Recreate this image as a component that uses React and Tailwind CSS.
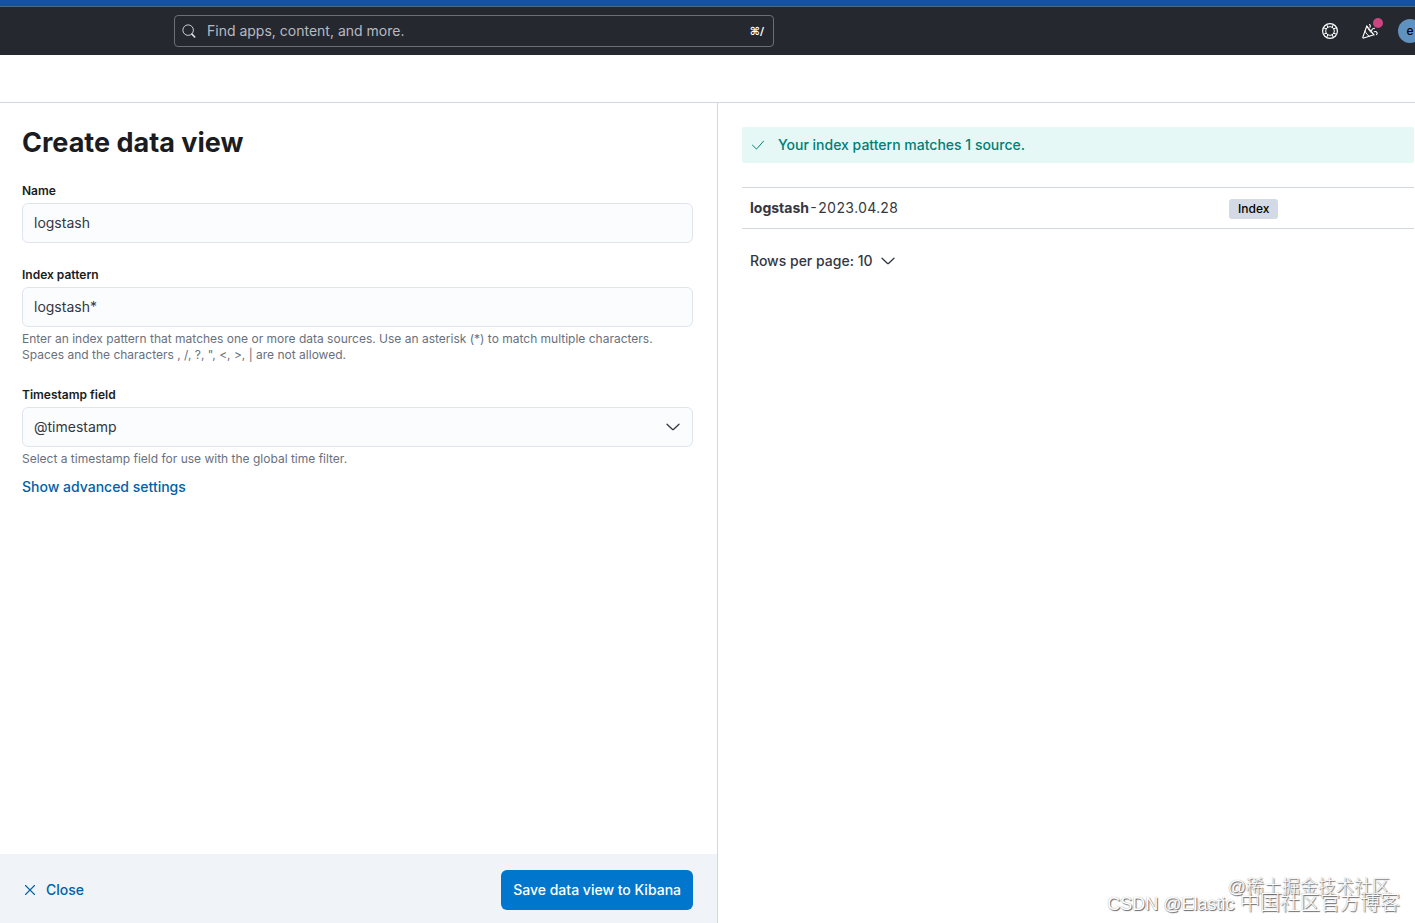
const matches = [{ id: "m1", prefix: "logstash", rest: "-2023.04.28", type: "Index" }];

function SearchIcon() {
  return (
    <svg width="14" height="14" viewBox="0 0 16 16" fill="none" stroke="#dfe5ef" strokeWidth="1" aria-hidden="true">
      <circle cx="7" cy="7" r="6" />
      <path d="M11.4 11.6L14.5 14.8" strokeLinecap="round" strokeWidth="1.8" />
    </svg>
  );
}

function HelpIcon() {
  return (
    <svg width="16" height="16" viewBox="0 0 16 16" fill="none" stroke="#ffffff" aria-hidden="true">
      <circle cx="8" cy="8" r="7.4" strokeWidth="1.2" />
      <circle cx="8" cy="8" r="4.3" strokeWidth="1" />
      <path d="M1.6 4.8L5 6M4.8 1.6L6 5M14.4 4.8L11 6M11.2 1.6L10 5M1.6 11.2L5 10M4.8 14.4L6 11M14.4 11.2L11 10M11.2 14.4L10 11" />
    </svg>
  );
}

function CheerIcon() {
  return (
    <svg width="16" height="16" viewBox="0 0 16 16" fill="none" stroke="#ffffff" strokeLinecap="round" strokeLinejoin="round" aria-hidden="true">
      <path d="M4.8 3L.8 14.2c-.2.6.3 1.1.9.9L12 11.8z" strokeWidth="1.1" />
      <path d="M4.8 3c1.4 3.6 3.7 6.6 7.2 8.8M3 8c1 2.4 2.5 4.3 4.500 5.300" />
      <path d="M7.5 1.5c.9.7 1 1.7.5 2.8M9.5 7.5c.6-1.6 1.7-2.4 3-2.3M12.3 8.8c1.1-.5 2.1-.2 2.6.7.4.7.2 1.5-.3 2.1" strokeWidth="1.1" />
    </svg>
  );
}

function ChevronIcon({ className }) {
  return (
    <svg
      width="16"
      height="16"
      viewBox="0 0 16 16"
      fill="none"
      stroke="#343741"
      strokeWidth="1.3"
      strokeLinecap="round"
      strokeLinejoin="round"
      className={className}
      aria-hidden="true"
    >
      <path d="M2 5.2l5.3 5.1a1 1 0 001.4 0L14 5.2" />
    </svg>
  );
}

function TopBar() {
  return (
    <header className="flex h-[55px] items-center justify-between border-t-[6px] border-[#15539e] bg-[#25282f]">
      <div className="flex h-full w-full items-center justify-between overflow-hidden border-t border-[#53647f]">
        <label className="ml-[174px] flex h-8 w-[600px] items-center rounded-[4px] border border-[#6b6e76] px-[7px]">
          <SearchIcon />
          <input
            type="search"
            aria-label="Find apps, content, and more."
            placeholder="Find apps, content, and more."
            className="ml-[11px] min-w-0 flex-1 bg-transparent text-sm text-white outline-none placeholder:text-[#b7bac2]"
          />
          <span className="pt-0.5 pr-0.5 font-['DejaVu_Sans',sans-serif] text-[11px] font-bold text-white">⌘/</span>
        </label>

        <div className="-mr-[7px] flex shrink-0 items-center">
          <button type="button" aria-label="Help" className="mr-6">
            <HelpIcon />
          </button>
          <button type="button" aria-label="What's new" className="relative mr-5">
            <CheerIcon />
            <span className="absolute -top-[5px] left-[11px] size-2.5 rounded-full bg-[#cc4482]" />
          </button>
          <button
            type="button"
            aria-label="Account"
            className="grid size-6 place-items-center rounded-full bg-[#6092c0] text-xs font-medium text-black"
          >
            e
          </button>
        </div>
      </div>
    </header>
  );
}

const fieldClass =
  "block h-10 w-full appearance-none rounded-md border border-[#e0e4ec] bg-[#fbfcfd] px-[11px] text-sm text-[#343741] outline-none";

function Field({ id, label, help, children }) {
  return (
    <div>
      <label htmlFor={id} className="mb-[3px] block pt-px text-xs leading-[18px] font-semibold text-[#1a1c21]">
        {label}
      </label>
      {children}
      {help && <p className="pt-1 text-xs text-[#69707d]">{help}</p>}
    </div>
  );
}

function DataViewForm() {
  return (
    <form className="flex flex-col border-r border-[#d3d8dd]" onSubmit={(e) => e.preventDefault()}>
      <div className="flex-1 px-6 pt-6 pl-[22px]">
        <h1 className="text-[27px] leading-8 font-bold text-[#1a1c21]">Create data view</h1>

        <div className="mt-[22px] space-y-[22px]">
          <Field id="name" label="Name">
            <input id="name" type="text" defaultValue="logstash" className={`${fieldClass} pb-0.5`} />
          </Field>
          <Field
            id="pattern"
            label="Index pattern"
            help={
              <>
                Enter an index pattern that matches one or more data sources. Use an asterisk (*) to match multiple
                characters. Spaces and the characters , /, ?, ", &lt;, &gt;, | are not allowed.
              </>
            }
          >
            <input id="pattern" type="text" defaultValue="logstash*" className={`${fieldClass} pb-0.5`} />
          </Field>
          <Field id="timestamp" label="Timestamp field" help="Select a timestamp field for use with the global time filter.">
            <div className="relative">
              <select id="timestamp" className={fieldClass}>
                <option>@timestamp</option>
              </select>
              <ChevronIcon className="pointer-events-none absolute top-3 right-3" />
            </div>
          </Field>
        </div>

        <button type="button" className="mt-2.5 text-sm font-medium text-[#0061a6]">
          Show advanced settings
        </button>
      </div>

      <footer className="flex items-center justify-between bg-[#f0f4f9] px-6 pt-4 pb-[13px]">
        <button type="button" className="flex items-center gap-2.5 text-sm font-medium text-[#0061a6]">
          <svg width="12" height="12" viewBox="0 0 12 12" stroke="#0061a6" strokeWidth="1.1" strokeLinecap="round" aria-hidden="true">
            <path d="M1.5 1.5l9 9M10.5 1.5l-9 9" />
          </svg>
          Close
        </button>
        <button type="submit" className="h-10 rounded-md bg-[#0077cc] px-3 text-sm font-medium text-white">
          Save data view to Kibana
        </button>
      </footer>
    </form>
  );
}

function MatchesPanel() {
  return (
    <section className="pt-6 pr-px pl-6">
      <div className="flex h-9 items-center gap-3 rounded-[2px] bg-[#e6f8f5] px-2 text-sm font-medium text-[#007e77]">
        <svg width="16" height="16" viewBox="0 0 16 16" fill="none" stroke="#007e77" strokeLinecap="round" strokeLinejoin="round" aria-hidden="true">
          <path d="M2.5 8.2l3.6 3.5a.6.6 0 00.8 0L13.5 4.2" />
        </svg>
        <p>Your index pattern matches 1 source.</p>
      </div>

      <table className="mt-6 w-full table-fixed border-collapse text-left text-sm text-[#343741]">
        <tbody>
          {matches.map((item) => (
            <tr key={item.id} className="h-[41px] border-y border-[#d3d8dd]">
              <td className="w-5/7 px-2 tabular-nums">
                <strong className="font-bold">{item.prefix}</strong>
                {item.rest}
              </td>
              <td className="px-[7px]">
                <span className="inline-block rounded-[3px] bg-[#d3dae6] px-[9px] text-xs leading-5 font-medium text-black">
                  {item.type}
                </span>
              </td>
            </tr>
          ))}
        </tbody>
      </table>

      <button type="button" className="mt-5 ml-2 flex h-6 items-center gap-2 text-sm font-medium text-[#343741]">
        Rows per page: 10
        <ChevronIcon />
      </button>
    </section>
  );
}

export default function App() {
  return (
    <div className="relative flex min-h-screen flex-col bg-white font-['Inter','Noto_Sans_CJK_SC',sans-serif]">
      <TopBar />
      <div className="h-12 border-b border-[#d3d8dd]" />
      <main className="grid flex-1 grid-cols-[718fr_697fr]">
        <DataViewForm />
        <MatchesPanel />
      </main>

      <div className="pointer-events-none absolute right-[15px] bottom-[11px] text-right font-['Liberation_Sans','Noto_Sans_CJK_SC',sans-serif] font-light whitespace-nowrap text-white [text-shadow:1px_1px_1px_#666,0_0_1px_#999]">
        <p className="pr-2.5 text-lg leading-4">@稀土掘金技术社区</p>
        <p className="text-xl leading-4">
          <span className="text-lg leading-4">CSDN @Elastic</span> 中国社区官方博客
        </p>
      </div>
    </div>
  );
}
